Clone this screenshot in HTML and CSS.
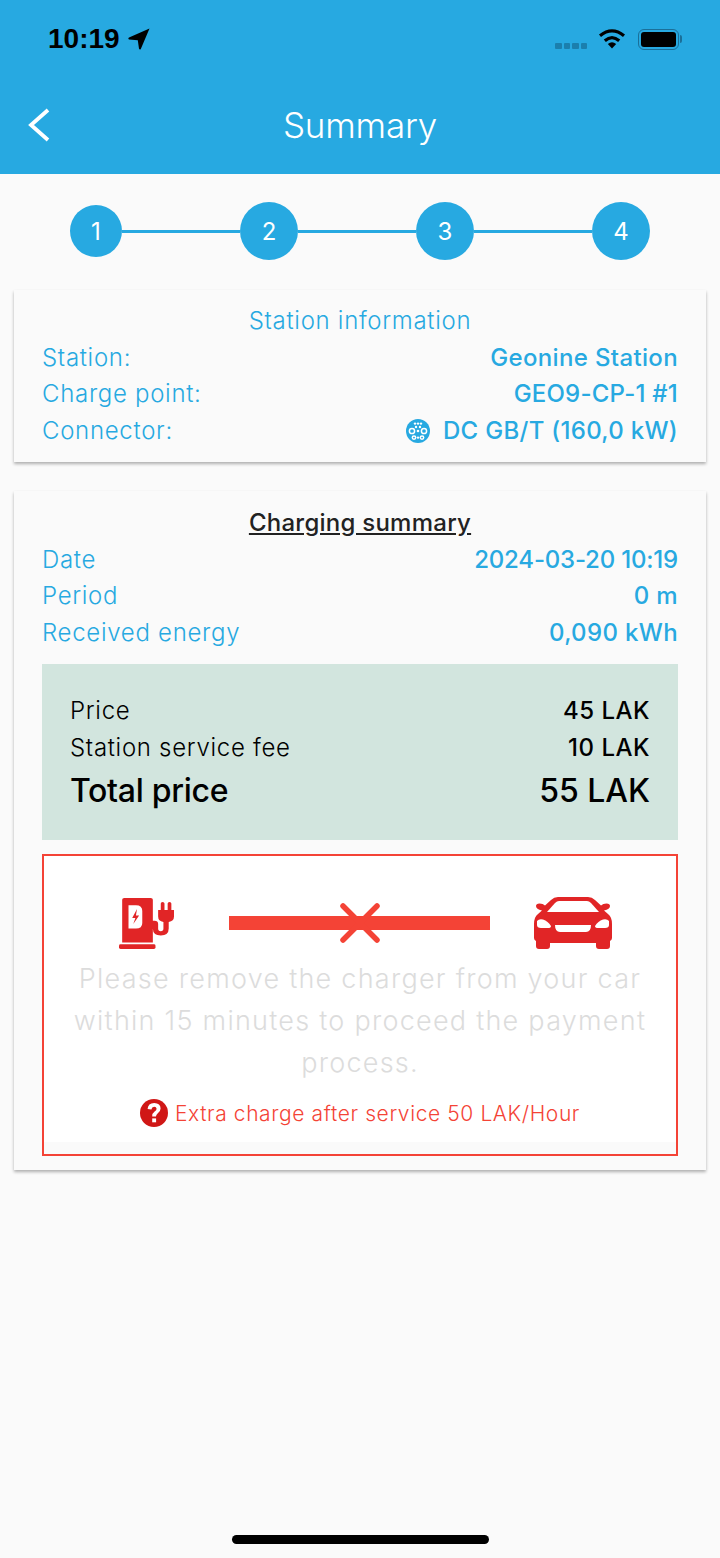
FILE: index.html
```html
<!DOCTYPE html>
<html lang="en" dir="ltr">
  <head>
    <meta charset="utf-8">
    <title>Summary</title>
    <link rel="stylesheet" href="styles.css">
  </head>
  <body>
    <div class="header">
      <div class="statusBar">
        <div class="statusLeft">
          <span class="time">10:19</span>
          <svg class="arrowIcon" viewBox="0 0 22 22"><path d="M21.5 .5 L12.8 21 Q11.8 22.2 11 20.8 L9.8 12.2 L1 11.5 Q-.3 10.6 1 9.6 Z"/></svg>
        </div>
        <div class="statusRight">
          <div class="signal"><i></i><i></i><i></i><i></i></div>
          <svg class="wifiIcon" viewBox="0 0 28 20">
            <path d="M14 19.6 L9.8 15 Q14 11.6 18.2 15 Z"/>
            <path d="M6.8 11.8 Q14 5.6 21.2 11.8" fill="none" stroke="#000" stroke-width="3.2"/>
            <path d="M2 6.8 Q14 -3 26 6.8" fill="none" stroke="#000" stroke-width="3.2"/>
          </svg>
          <div class="battery"><div class="batteryFill"></div></div>
          <div class="batteryCap"></div>
        </div>
      </div>
      <div class="navBar">
        <svg class="backIcon" viewBox="0 0 24 36"><path d="M21 3 L4 18 L21 33" fill="none" stroke="#fff" stroke-width="3.8"/></svg>
        <h1 class="navTitle">Summary</h1>
      </div>
    </div>

    <div class="steps">
      <div class="step stepSmall">1</div>
      <div class="stepLine"></div>
      <div class="step">2</div>
      <div class="stepLine"></div>
      <div class="step">3</div>
      <div class="stepLine"></div>
      <div class="step">4</div>
    </div>

    <div class="card stationCard">
      <div class="cardTitle">Station information</div>
      <div class="row"><span>Station:</span><b>Geonine Station</b></div>
      <div class="row"><span>Charge point:</span><b class="pointValue">GEO9-CP-1 #1</b></div>
      <div class="row">
        <span>Connector:</span>
        <b class="connector">
          <svg class="connectorIcon" viewBox="0 0 24 24">
            <circle cx="12" cy="12" r="12" fill="#27a9e1"/>
            <g fill="none" stroke="#fff" stroke-width="1.5">
              <circle cx="6" cy="12" r="2.6"/>
              <circle cx="18" cy="12" r="2.6"/>
              <circle cx="8" cy="18.6" r="1.7"/>
              <circle cx="16" cy="18.6" r="1.7"/>
            </g>
            <g fill="#fff">
              <circle cx="9" cy="4.6" r="1.2"/><circle cx="12" cy="4.6" r="1.2"/><circle cx="15" cy="4.6" r="1.2"/>
              <circle cx="10" cy="8" r="1.2"/><circle cx="14" cy="8" r="1.2"/><circle cx="12" cy="12" r="1.3"/><circle cx="12" cy="18.6" r="1.2"/>
            </g>
          </svg>
          DC GB/T (160,0 kW)
        </b>
      </div>
    </div>

    <div class="card summaryCard">
      <div class="cardTitle summaryTitle"><u>Charging summary</u></div>
      <div class="row"><span>Date</span><b class="dateValue">2024-03-20 10:19</b></div>
      <div class="row"><span>Period</span><b>0 m</b></div>
      <div class="row"><span>Received energy</span><b>0,090 kWh</b></div>

      <div class="priceBox">
        <div class="priceRow"><span>Price</span><b>45 LAK</b></div>
        <div class="priceRow"><span>Station service fee</span><b>10 LAK</b></div>
        <div class="priceRow totalRow"><span>Total price</span><b>55 LAK</b></div>
      </div>

      <div class="warnBox">
        <div class="warnInner">
          <div class="warnIcons">
            <svg class="chargerIcon" viewBox="0 0 52 56" preserveAspectRatio="none">
              <path fill="#e12526" d="M5 1 H30 Q32 1 32 3 V25.5 H33.5 Q37 25.5 37 29 V34 Q37 37 39.5 37 Q42 37 42 34 V27 Q37 26 37 21 V14 H39.5 V7 Q39.5 5.3 41.2 5.3 Q43 5.3 43 7 V14 H46 V7 Q46 5.3 47.8 5.3 Q49.5 5.3 49.5 7 V14 H52 V21 Q52 26 47 27 V34 Q47 41.5 39.5 41.5 Q32 41.5 32 34 V30 V49 H3 V3 Q3 1 5 1 Z"/>
              <path fill="#e12526" d="M1.5 51 H33 Q34.5 51 34.5 52.5 V54.5 Q34.5 56 33 56 H1.5 Q0 56 0 54.5 V52.5 Q0 51 1.5 51 Z"/>
              <path fill="#fff" d="M9 9 H16 Q22 9 22 15 V28 Q22 34 16 34 H9 Z"/>
              <path fill="#e12526" d="M17 13 L12.5 22.5 H15.5 L13.5 29 L19 20 H16 Z"/>
            </svg>
            <div class="cableLine"><svg class="crossIcon" viewBox="0 0 40 40"><path d="M3 3 L37 37 M37 3 L3 37" stroke="#f44336" stroke-width="5.5" stroke-linecap="round"/></svg></div>
            <svg class="carIcon" viewBox="0 0 80 52">
              <path fill="#e12526" d="M25 0 H55 Q59 0 62 3 L68 8.5 Q70 6.5 73.5 6.5 Q77 6.5 77 9 Q77 12 71 13.5 L75 17 Q79 20 79 27 V41 Q79 43 77 44 V49 Q77 52 74 52 H66 Q63 52 63 49 V46 H17 V49 Q17 52 14 52 H6 Q3 52 3 49 V44 Q1 43 1 41 V27 Q1 20 5 17 L9 13.5 Q3 12 3 9 Q3 6.5 6.5 6.5 Q10 6.5 12 8.5 L18 3 Q21 0 25 0 Z"/>
              <path fill="#fff" d="M26 4 H54 Q56 4 58 6 L66 15 H14 L22 6 Q24 4 26 4 Z"/>
              <path fill="#fff" d="M4 24 Q6 21.5 10 22.5 Q15 24 18 29 Q18 31 15 31 H8 Q4 31 4 28 Z"/>
              <path fill="#fff" d="M76 24 Q74 21.5 70 22.5 Q65 24 62 29 Q62 31 65 31 H72 Q76 31 76 28 Z"/>
              <path fill="#fff" d="M22 28 H58 Q58 35 53 35 H27 Q22 35 22 28 Z"/>
            </svg>
          </div>
          <p class="warnText">Please remove the charger from your car within 15 minutes to proceed the payment process.</p>
          <div class="extraCharge">
            <svg class="helpIcon" viewBox="0 0 28 28">
              <circle cx="14" cy="14" r="14" fill="#d01716"/>
              <path d="M7.6 10 Q8 4 14.2 4 Q20.6 4.2 20.6 9.6 Q20.6 12.6 17.6 14.4 Q16 15.6 16 17.6 H12.2 Q12 14.4 14.6 12.6 Q16.6 11.4 16.6 9.8 Q16.4 7.8 14.2 7.8 Q11.8 7.8 11.4 10.4 Z" fill="#fff"/>
              <rect x="12.2" y="19.4" width="3.9" height="3.9" fill="#fff"/>
            </svg>
            <span>Extra charge after service 50 LAK/Hour</span>
          </div>
        </div>
      </div>
    </div>

    <div class="homeBar"></div>
  </body>
</html>
```

FILE: styles.css
```css
html, body{
  margin: 0;
  padding: 0;
}
body{
  width: 720px;
  height: 1558px;
  background-color: #fafafa;
  font-family: "Inter", "Noto Sans", sans-serif;
  font-weight: 300;
  position: relative;
  overflow: hidden;
}

/* header */
.header{
  background-color: #27a9e1;
  height: 174px;
  color: white;
}
.statusBar{
  height: 78px;
  display: flex;
  justify-content: space-between;
  align-items: center;
  padding: 0 38px 0 48px;
}
.statusLeft{
  display: flex;
  align-items: center;
  gap: 8px;
}
.time{
  font-family: "Liberation Sans", sans-serif;
  font-weight: 700;
  font-size: 28px;
  color: black;
  letter-spacing: 0;
}
.arrowIcon{
  width: 22px;
  height: 22px;
}
.statusRight{
  display: flex;
  align-items: center;
}
.signal{
  display: flex;
  gap: 2px;
  margin-right: 11px;
  margin-top: 14px;
}
.signal i{
  width: 6.5px;
  height: 6px;
  border-radius: 1px;
  background-color: #1b7fad;
}
.wifiIcon{
  width: 28px;
  height: 20px;
  margin-right: 12px;
  margin-top: -1px;
}
.battery{
  width: 41px;
  height: 21px;
  box-sizing: border-box;
  border: 1.5px solid #1a6f99;
  border-radius: 6px;
  padding: 2px;
}
.batteryFill{
  height: 100%;
  background-color: black;
  border-radius: 3px;
}
.batteryCap{
  width: 2px;
  height: 8px;
  margin-left: 1px;
  background-color: #1a6f99;
  border-radius: 0 2px 2px 0;
}
.navBar{
  height: 96px;
  display: flex;
  align-items: center;
  padding: 0 0 0 27px;
  margin-top: -1px;
}
.backIcon{
  width: 24px;
  height: 36px;
}
.navTitle{
  flex: 1;
  margin: 0 0 0 -51px;
  text-align: center;
  font-size: 35px;
  font-weight: 300;
  letter-spacing: -0.2px;
}

/* steps */
.steps{
  display: flex;
  align-items: center;
  padding: 28px 0 0 70px;
  height: 58px;
}
.step{
  flex: none;
  width: 58px;
  height: 58px;
  border-radius: 50%;
  background-color: #27a9e1;
  color: white;
  font-size: 24px;
  font-weight: 400;
  display: flex;
  align-items: center;
  justify-content: center;
}
.stepSmall{
  width: 52px;
  height: 52px;
}
.stepLine{
  height: 3px;
  width: 118px;
  background-color: #27a9e1;
}

/* cards */
.card{
  background-color: #fafafa;
  margin: 0 14px;
  padding: 13px 28px;
  box-sizing: border-box;
  box-shadow: 0 2px 3px rgba(0,0,0,0.3);
  color: #27a9e1;
  font-size: 24px;
  letter-spacing: 0.7px;
}
.stationCard{
  margin-top: 30px;
  height: 172px;
}
.summaryCard{
  margin-top: 29px;
  height: 679px;
  padding-top: 14px;
}
.cardTitle{
  text-align: center;
  height: 36.5px;
  line-height: 36px;
}
.summaryTitle{
  color: #222;
  font-weight: 500;
  letter-spacing: 0.25px;
}
.row{
  display: flex;
  justify-content: space-between;
  align-items: center;
  height: 36.5px;
  line-height: 36px;
}
.row b{
  font-weight: 500;
  letter-spacing: 0.35px;
}
.row .dateValue{
  letter-spacing: -0.2px;
}
.row .pointValue{
  letter-spacing: 0.2px;
}
.row .connector{
  letter-spacing: 0.3px;
}
.connector{
  display: flex;
  align-items: center;
  gap: 13px;
}
.connectorIcon{
  width: 24px;
  height: 24px;
}

/* price box */
.priceBox{
  margin-top: 13px;
  height: 176px;
  box-sizing: border-box;
  padding: 28px 28px 0;
  background-color: #d2e5de;
  color: black;
}
.priceRow{
  display: flex;
  justify-content: space-between;
  align-items: center;
  height: 37px;
}
.priceRow b{
  font-weight: 500;
  letter-spacing: 0.5px;
}
.totalRow{
  height: 49px;
  font-size: 32px;
}
.totalRow span{
  font-weight: 500;
  letter-spacing: -0.3px;
}
.totalRow b{
  letter-spacing: 0;
}

/* warning */
.warnBox{
  margin-top: 14px;
  height: 302px;
  box-sizing: border-box;
  border: 2px solid #f44336;
  background-color: #fafafa;
}
.warnInner{
  height: 286px;
  background-color: white;
  box-sizing: border-box;
  padding-top: 41px;
}
.warnIcons{
  display: flex;
  align-items: center;
  padding-left: 75px;
  height: 52px;
}
.chargerIcon{
  width: 55px;
  height: 52px;
}
.cableLine{
  width: 261px;
  height: 14px;
  margin-left: 55px;
  background-color: #f44336;
  display: flex;
  align-items: center;
  justify-content: center;
}
.crossIcon{
  flex: none;
  width: 40px;
  height: 40px;
}
.carIcon{
  width: 80px;
  height: 52px;
  margin-left: 43px;
}
.warnText{
  margin: 9px 12px 0;
  text-align: center;
  color: #dcdcdc;
  font-size: 27px;
  line-height: 42px;
  letter-spacing: 1.25px;
}
.extraCharge{
  margin-top: 15px;
  display: flex;
  align-items: center;
  justify-content: center;
  gap: 7px;
  color: #f44336;
  font-size: 21px;
  letter-spacing: 0.6px;
}
.helpIcon{
  width: 28px;
  height: 28px;
}

.homeBar{
  position: absolute;
  left: 232px;
  bottom: 14px;
  width: 257px;
  height: 9px;
  border-radius: 5px;
  background-color: black;
}
```
